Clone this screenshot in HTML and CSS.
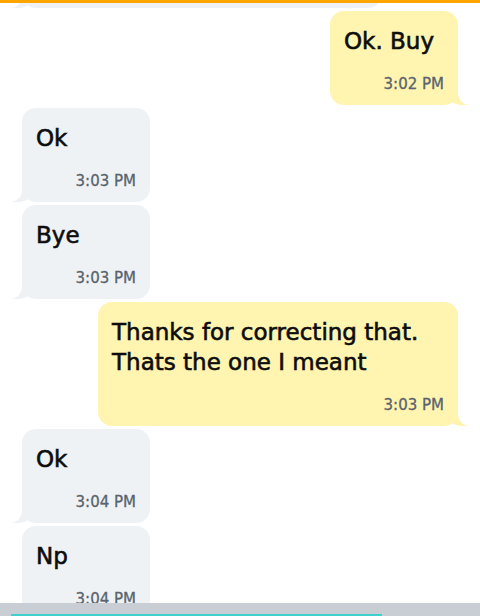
FILE: index.html
```html
<!DOCTYPE html>
<html lang="en">
<head>
    <meta charset="UTF-8">
    <meta name="viewport" content="width=device-width, initial-scale=1.0">
    <title>Messages</title>
    <link rel="stylesheet" href="styles.css">
</head>
<body>
    <div class="screen">
        <div class="top-bar"></div>

        <!-- Conversation, scrolled part way down -->
        <div class="chat">
            <div class="thread">
                <div class="msg them">
                    <p class="text">Which one do you want me to pick up on the way home</p>
                    <span class="time">3:01 PM</span>
                </div>
                <div class="msg me">
                    <p class="text">Ok. Buy</p>
                    <span class="time">3:02 PM</span>
                </div>
                <div class="msg them">
                    <p class="text">Ok</p>
                    <span class="time">3:03 PM</span>
                </div>
                <div class="msg them">
                    <p class="text">Bye</p>
                    <span class="time">3:03 PM</span>
                </div>
                <div class="msg me">
                    <p class="text">Thanks for correcting that. Thats the one I meant</p>
                    <span class="time">3:03 PM</span>
                </div>
                <div class="msg them">
                    <p class="text">Ok</p>
                    <span class="time">3:04 PM</span>
                </div>
                <div class="msg them">
                    <p class="text">Np</p>
                    <span class="time">3:04 PM</span>
                </div>
            </div>
        </div>

        <div class="composer">
            <div class="input-line"></div>
        </div>
    </div>
</body>
</html>
```

FILE: styles.css
```css
* {
    margin: 0;
    padding: 0;
    box-sizing: border-box;
}

body {
    background: #fff;
    font-family: "DejaVu Sans", "Noto Sans", sans-serif;
}

.screen {
    width: 480px;
    height: 616px;
    display: flex;
    flex-direction: column;
    overflow: hidden;
}

.top-bar {
    height: 3px;
    background: #ffa502;
    flex-shrink: 0;
}

.chat {
    flex: 1;
    overflow: hidden;
}

.thread {
    display: flex;
    flex-direction: column;
    gap: 3px;
    padding: 0 22px;
    margin-top: -119px;
}

.msg {
    position: relative;
    z-index: 0;
    min-width: 128px;
    max-width: 360px;
    padding: 15px 14px 11px;
    border-radius: 14px;
}

.msg.me {
    align-self: flex-end;
    background: #fff4b0;
}

.msg.them {
    align-self: flex-start;
    background: #eff2f5;
}

/* bubble tails */
.msg::before,
.msg::after {
    content: "";
    position: absolute;
    z-index: -1;
    bottom: 0;
    height: 20px;
}

.msg.me::before {
    right: -12px;
    width: 24px;
    background: #fff4b0;
    border-bottom-left-radius: 16px 14px;
}

.msg.me::after {
    right: -14px;
    width: 14px;
    background: #fff;
    border-bottom-left-radius: 12px;
}

.msg.them::before {
    left: -12px;
    width: 24px;
    background: #eff2f5;
    border-bottom-right-radius: 16px 14px;
}

.msg.them::after {
    left: -14px;
    width: 14px;
    background: #fff;
    border-bottom-right-radius: 12px;
}

.text {
    font-size: 23px;
    line-height: 30px;
    color: #0d0d0d;
    -webkit-text-stroke: 0.6px #0d0d0d;
}

.time {
    display: block;
    margin-top: 18px;
    text-align: right;
    font-size: 15px;
    line-height: 20px;
    color: #58636f;
    -webkit-text-stroke: 0.3px #58636f;
}

.composer {
    height: 13px;
    flex-shrink: 0;
    background: #c8ced4;
    display: flex;
    align-items: flex-end;
    padding-left: 11px;
}

.input-line {
    width: 371px;
    height: 2px;
    background: #3fd0d0;
}
```
